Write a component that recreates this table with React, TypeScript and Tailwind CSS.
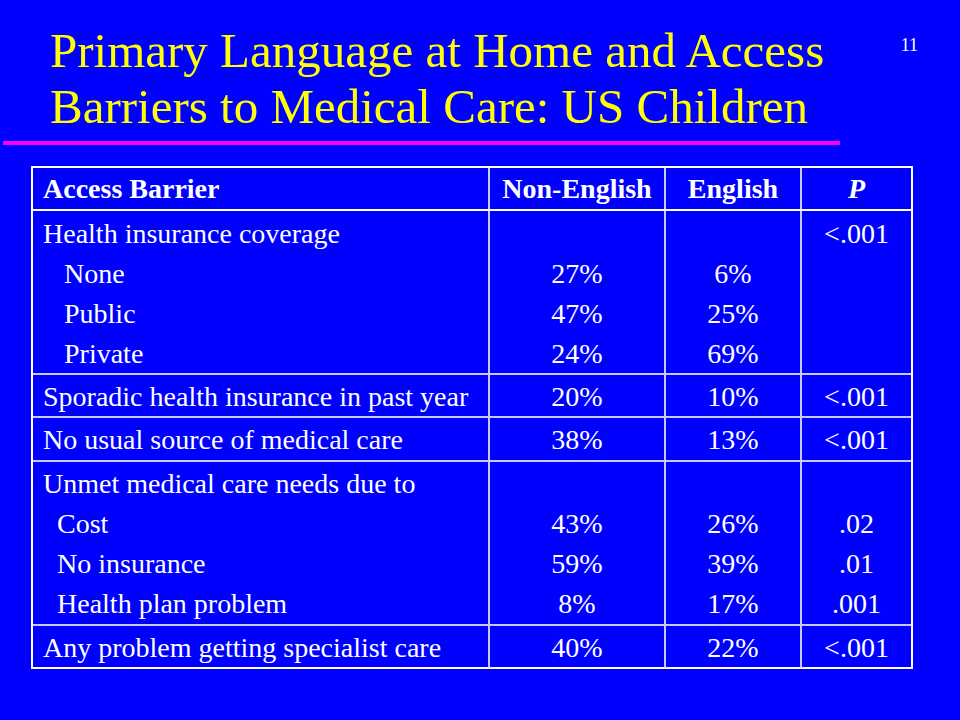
const serif = { fontFamily: '"Liberation Serif", "Times New Roman", serif' };

type Row = {
  label: string[];
  indent?: string;
  nonEnglish: string[];
  english: string[];
  p: string[];
  h: string;
};

const rows: Row[] = [
  {
    label: ["Health insurance coverage", "None", "Public", "Private"],
    indent: "pl-[21px]",
    nonEnglish: ["", "27%", "47%", "24%"],
    english: ["", "6%", "25%", "69%"],
    p: ["<.001"],
    h: "h-[164px] pt-[3px]",
  },
  {
    label: ["Sporadic health insurance in past year"],
    nonEnglish: ["20%"],
    english: ["10%"],
    p: ["<.001"],
    h: "h-[43px] pt-[2px]",
  },
  {
    label: ["No usual source of medical care"],
    nonEnglish: ["38%"],
    english: ["13%"],
    p: ["<.001"],
    h: "h-[44px] pt-[2px]",
  },
  {
    label: ["Unmet medical care needs due to", "Cost", "No insurance", "Health plan problem"],
    indent: "pl-[14px]",
    nonEnglish: ["", "43%", "59%", "8%"],
    english: ["", "26%", "39%", "17%"],
    p: ["", ".02", ".01", ".001"],
    h: "h-[164px] pt-[2px]",
  },
  {
    label: ["Any problem getting specialist care"],
    nonEnglish: ["40%"],
    english: ["22%"],
    p: ["<.001"],
    h: "h-[43px] pt-[2px]",
  },
];

function Lines({ items }: { items: string[] }) {
  return (
    <>
      {items.map((t, i) => (
        <div key={i} className="h-[40px] leading-[40px] whitespace-nowrap">
          {t || "\u00a0"}
        </div>
      ))}
    </>
  );
}

export default function App() {
  return (
    <div className="w-[960px] h-[720px] bg-[#0000ff] overflow-hidden" style={serif}>
      <div className="flex justify-between pt-[23px] pl-[50px] pr-[42px]">
        <h1 className="text-[#ffff00] text-[49px] leading-[56px]">
          Primary Language at Home and Access
          <br />
          Barriers to Medical Care: US Children
        </h1>
        <div className="text-white text-[18px] leading-none pt-[13px]">11</div>
      </div>

      <div className="ml-[3px] mt-[6px] w-[837px] h-[4px] bg-[#ff00ff]" />

      <div className="ml-[31px] mt-[21px] w-[882px] border-2 border-white text-white text-[28px]">
        <div className="grid grid-cols-[455px_176px_136px_111px] font-bold h-[41px]">
          <div className="leading-[41px] pl-[10px]">Access Barrier</div>
          <div className="leading-[41px] text-center border-l-2 border-[#c8c8ff]">Non-English</div>
          <div className="leading-[41px] text-center border-l-2 border-[#c8c8ff]">English</div>
          <div className="leading-[41px] text-center border-l-2 border-[#c8c8ff] italic">P</div>
        </div>
        {rows.map((r, i) => (
          <div
            key={i}
            className={`grid grid-cols-[455px_176px_136px_111px] border-t-2 ${
              i === 0 ? "border-white" : "border-[#c8c8ff]"
            } ${r.h}`}
          >
            <div className="pl-[10px]">
              <div className="h-[40px] leading-[40px] whitespace-nowrap">{r.label[0]}</div>
              {r.label.slice(1).map((t) => (
                <div key={t} className={`h-[40px] leading-[40px] whitespace-nowrap ${r.indent}`}>
                  {t}
                </div>
              ))}
            </div>
            <div className="text-center border-l-2 border-[#c8c8ff] -mt-[3px] pt-[3px]">
              <Lines items={r.nonEnglish} />
            </div>
            <div className="text-center border-l-2 border-[#c8c8ff] -mt-[3px] pt-[3px]">
              <Lines items={r.english} />
            </div>
            <div className="text-center border-l-2 border-[#c8c8ff] -mt-[3px] pt-[3px]">
              <Lines items={r.p} />
            </div>
          </div>
        ))}
      </div>
    </div>
  );
}
